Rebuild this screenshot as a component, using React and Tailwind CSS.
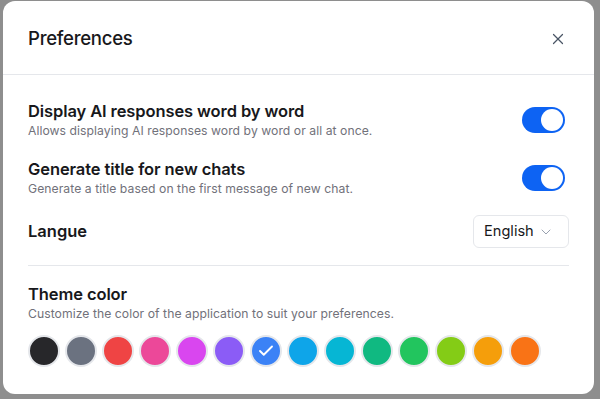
import { useState } from "react";
import { X, ChevronDown, Check } from "lucide-react";

const colors = [
  "#27272a",
  "#6b7280",
  "#ef4444",
  "#ec4899",
  "#d946ef",
  "#8b5cf6",
  "#3b82f6",
  "#0ea5e9",
  "#06b6d4",
  "#10b981",
  "#22c55e",
  "#84cc16",
  "#f59e0b",
  "#f97316",
];

const Toggle = ({ on, onClick }) => (
  <button
    onClick={onClick}
    className={`mr-[4px] flex h-[26px] w-[43px] shrink-0 items-center rounded-full p-[2px] ${
      on ? "bg-[#0d63f3] justify-end" : "bg-gray-300 justify-start"
    }`}
  >
    <span className="block h-[22px] w-[22px] rounded-full bg-white" />
  </button>
);

const App = () => {
  const [wordByWord, setWordByWord] = useState(true);
  const [genTitle, setGenTitle] = useState(true);
  const [theme, setTheme] = useState(6);

  return (
    <div
      className="h-[399px] w-[600px] bg-[#8e8e8e] pl-[3px] pt-[1px]"
      style={{ fontFamily: "Inter, 'Noto Sans', sans-serif" }}
    >
      <div className="h-[393px] w-[591px] rounded-[12px] bg-white text-[#18181b]">
        {/* header */}
        <div className="flex h-[74px] items-center justify-between border-b border-gray-200 pl-[25px] pr-[27px] pt-[3px]">
          <p className="text-[18.6px] font-medium tracking-[-0.3px]">Preferences</p>
          <X size={18} strokeWidth={1.6} className="text-gray-600" />
        </div>

        <div className="px-[25px] pt-[25px]">
          {/* word by word */}
          <div className="flex items-center justify-between">
            <div>
              <p className="text-[16.5px] font-semibold leading-[22px] tracking-[-0.1px]">
                Display AI responses word by word
              </p>
              <p className="text-[12.2px] leading-[18px] tracking-[0.05px] text-[#71717a]">
                Allows displaying AI responses word by word or all at once.
              </p>
            </div>
            <Toggle on={wordByWord} onClick={() => setWordByWord(!wordByWord)} />
          </div>

          {/* title */}
          <div className="mt-[18px] flex items-center justify-between">
            <div>
              <p className="text-[16.5px] font-semibold leading-[22px] tracking-[-0.1px]">
                Generate title for new chats
              </p>
              <p className="text-[12.2px] leading-[18px] tracking-[0.05px] text-[#71717a]">
                Generate a title based on the first message of new chat.
              </p>
            </div>
            <Toggle on={genTitle} onClick={() => setGenTitle(!genTitle)} />
          </div>

          {/* langue */}
          <div className="mt-[17px] flex items-center justify-between">
            <p className="text-[16.5px] font-semibold">Langue</p>
            <button className="flex h-[33px] w-[96px] items-center justify-between rounded-[6px] border border-gray-200 pl-[10px] pr-[14px] text-[14.6px]">
              English
              <ChevronDown size={16} strokeWidth={1.5} className="text-gray-400" />
            </button>
          </div>

          <div className="mt-[17px] border-t border-gray-200" />

          {/* theme color */}
          <div className="pt-[17px]">
            <p className="text-[16.5px] font-semibold leading-[22px] tracking-[-0.1px]">Theme color</p>
            <p className="text-[12.2px] leading-[18px] tracking-[0.05px] text-[#71717a]">
              Customize the color of the application to suit your preferences.
            </p>
            <div className="mt-[12px] flex gap-[5px]">
              {colors.map((c, i) => (
                <button
                  key={c}
                  onClick={() => setTheme(i)}
                  className="flex h-[32px] w-[32px] items-center justify-center rounded-full border-2 border-gray-200"
                  style={{ backgroundColor: c }}
                >
                  {theme === i && <Check size={18} strokeWidth={2.5} className="text-white" />}
                </button>
              ))}
            </div>
          </div>
        </div>
      </div>
    </div>
  );
};

export default App;
